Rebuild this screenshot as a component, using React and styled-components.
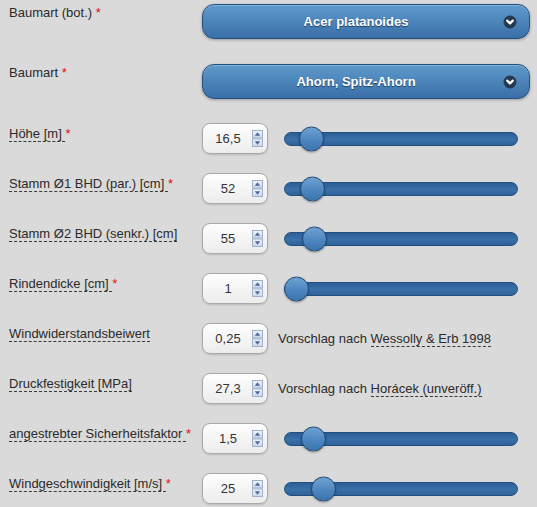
import React from 'react';
import styled, { createGlobalStyle } from 'styled-components';

const Global = createGlobalStyle`
  html, body { margin: 0; padding: 0; background: #dadada; }
  body {
    font-family: "Liberation Sans", Arial, sans-serif;
    font-size: 13px;
    color: #2a2a2a;
  }
`;

const Page = styled.div`
  box-sizing: border-box;
  width: 537px;
  padding: 4px 0 0 9px;
`;

const Row = styled.div`
  display: grid;
  grid-template-columns: 193px 1fr;
  align-items: start;
  height: ${p => p.$h}px;
  margin-bottom: ${p => p.$gap}px;
`;

const Label = styled.div`
  padding-top: ${p => p.$pt}px;
  line-height: 15px;
  white-space: nowrap;
`;

const Hint = styled.span`
  border-bottom: 1px dashed #3a3a3a;
`;

const Star = styled.span`
  color: #e01010;
`;

const Controls = styled.div`
  display: flex;
  align-items: center;
  height: 100%;
  gap: ${p => p.$gap || 16}px;
`;

const SelectButton = styled.div`
  position: relative;
  box-sizing: border-box;
  width: 328px;
  height: 35px;
  display: flex;
  align-items: center;
  justify-content: center;
  padding: 0 35px 0 15px;
  border: 1px solid #22507f;
  border-radius: 12px;
  background: linear-gradient(#5f9acc, #3a6fa7);
  box-shadow: 0 1px 3px rgba(0, 0, 0, 0.3), inset 0 1px 0 rgba(255,255,255,0.25);
  color: #fff;
  font-weight: bold;
  font-size: 13px;
  text-shadow: 0 1px 1px #1d3d60;
`;

const SelectIcon = styled.svg`
  position: absolute;
  right: 12px;
  top: 50%;
  transform: translateY(-50%);
`;

const NumberBox = styled.div`
  box-sizing: border-box;
  width: 66px;
  height: 31px;
  display: flex;
  align-items: center;
  flex: none;
  border: 1px solid #a9a9a9;
  border-radius: 8px;
  background: linear-gradient(#fefefe, #ececec);
  box-shadow: 0 1px 2px rgba(0, 0, 0, 0.15);
  padding-right: 4px;
`;

const NumberValue = styled.span`
  flex: 1;
  text-align: center;
  color: #333;
  font-size: 13px;
  padding-left: 1px;
`;

const Track = styled.div`
  position: relative;
  box-sizing: border-box;
  width: 234px;
  height: 14px;
  border-radius: 7px;
  border: 1px solid #234f7e;
  background: linear-gradient(#2c5e96, #3a6fa8 55%, #2f629b);
`;

const Thumb = styled.div`
  position: absolute;
  top: 50%;
  width: 25px;
  height: 25px;
  box-sizing: border-box;
  border-radius: 50%;
  border: 1px solid #1f4872;
  background: linear-gradient(#6fa2d3, #4a83bd 60%, #3c74ae);
  box-shadow: 0 1px 2px rgba(0, 0, 0, 0.35);
  transform: translate(-1px, -50%);
`;

const Suggestion = styled.span`
  color: #2a2a2a;
  white-space: nowrap;
`;

const Spinner = () => (
  <svg width="11" height="17" viewBox="0 0 11 17">
    <defs>
      <linearGradient id="spg" x1="0" y1="0" x2="0" y2="1">
        <stop offset="0" stopColor="#f1f5fb" />
        <stop offset="1" stopColor="#c8d5ea" />
      </linearGradient>
    </defs>
    <rect x="0.5" y="0.5" width="10" height="7.5" fill="url(#spg)" stroke="#9fb0cc" />
    <rect x="0.5" y="9" width="10" height="7.5" fill="url(#spg)" stroke="#9fb0cc" />
    <path d="M5.5 2.3 L8.2 5.7 H2.8 Z" fill="#4c6796" />
    <path d="M5.5 14.7 L8.2 11.3 H2.8 Z" fill="#4c6796" />
  </svg>
);

const Chevron = () => (
  <SelectIcon width="14" height="14" viewBox="0 0 14 14">
    <circle cx="7" cy="7" r="6.5" fill="#243a52" />
    <path d="M4.2 5.6 L7 8.4 L9.8 5.6" fill="none" stroke="#fff" strokeWidth="2.2" strokeLinecap="round" strokeLinejoin="round" />
  </SelectIcon>
);

const Select = ({ value }) => (
  <SelectButton>
    {value}
    <Chevron />
  </SelectButton>
);

const NumberInput = ({ value }) => (
  <NumberBox>
    <NumberValue>{value}</NumberValue>
    <Spinner />
  </NumberBox>
);

const Slider = ({ pos }) => (
  <Track>
    <Thumb style={{ left: pos }} />
  </Track>
);

const FieldLabel = ({ text, hint, required, pt }) => (
  <Label $pt={pt}>
    {hint ? <Hint>{text}{required ? '\u00a0' : ''}</Hint> : <>{text}{required ? ' ' : ''}</>}
    {required && <Star>*</Star>}
  </Label>
);

const numberRows = [
  { label: 'Höhe [m]', req: true, value: '16,5', pos: 15 },
  { label: 'Stamm Ø1 BHD (par.) [cm]', req: true, value: '52', pos: 16 },
  { label: 'Stamm Ø2 BHD (senkr.) [cm]', req: false, value: '55', pos: 18 },
  { label: 'Rindendicke [cm]', req: true, value: '1', pos: 0 },
  { label: 'Windwiderstandsbeiwert', req: false, value: '0,25', pre: 'Vorschlag nach ', src: 'Wessolly & Erb 1998' },
  { label: 'Druckfestigkeit [MPa]', req: false, value: '27,3', pre: 'Vorschlag nach ', src: 'Horácek (unveröff.)' },
  { label: 'angestrebter Sicherheitsfaktor', req: true, value: '1,5', pos: 17 },
  { label: 'Windgeschwindigkeit [m/s]', req: true, value: '25', pos: 27 },
];

export default function App() {
  return (
    <>
      <Global />
      <Page>
        <Row $h={35} $gap={25}>
          <FieldLabel text="Baumart (bot.)" required pt={1} />
          <Select value="Acer platanoides" />
        </Row>
        <Row $h={35} $gap={24}>
          <FieldLabel text="Baumart" required pt={1} />
          <Select value="Ahorn, Spitz-Ahorn" />
        </Row>
        {numberRows.map(r => (
          <Row key={r.label} $h={31} $gap={19}>
            <FieldLabel text={r.label} hint required={r.req} pt={3} />
            {r.src ? (
              <Controls $gap={10}>
                <NumberInput value={r.value} />
                <Suggestion>
                  {r.pre}
                  <Hint>{r.src}</Hint>
                </Suggestion>
              </Controls>
            ) : (
              <Controls>
                <NumberInput value={r.value} />
                <Slider pos={r.pos} />
              </Controls>
            )}
          </Row>
        ))}
      </Page>
    </>
  );
}
